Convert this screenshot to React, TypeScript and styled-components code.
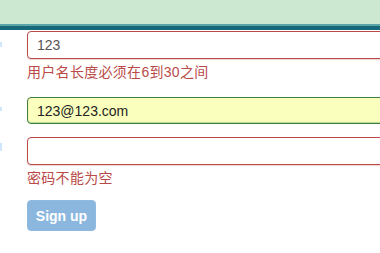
import React from "react";
import styled, { createGlobalStyle } from "styled-components";

const GlobalStyle = createGlobalStyle`
  body {
    margin: 0;
    background: #ffffff;
    font-family: "Liberation Sans", Arial, "Noto Sans CJK SC", sans-serif;
    overflow: hidden;
  }
`;

const Header = styled.div`
  height: 24px;
  background: #cde8d0;
  border-bottom: 2px solid #5aa3a6;
`;

const HeaderRule = styled.div`
  height: 4px;
  background: #15697b;
`;

const Viewport = styled.div`
  overflow: hidden;
`;

const Form = styled.form`
  display: flex;
  flex-direction: column;
  padding-top: 1px;
  width: 420px;
`;

const Row = styled.div<{ $gap: number }>`
  display: flex;
  margin-top: ${(p) => p.$gap}px;
`;

const LabelCol = styled.div<{ $top: number; $h: number }>`
  width: 27px;
  flex: none;
  &::before {
    content: "";
    display: block;
    margin-top: ${(p) => p.$top}px;
    width: 2px;
    height: ${(p) => p.$h}px;
    background: #cfe6fb;
  }
`;

const Field = styled.div`
  flex: 1;
  display: flex;
  flex-direction: column;
`;

const Input = styled.input<{ $state: "error" | "success"; $h?: number }>`
  box-sizing: border-box;
  height: ${(p) => p.$h ?? 28}px;
  width: 100%;
  padding: 0 9px;
  font: 14px "Liberation Sans", Arial, sans-serif;
  color: ${(p) => (p.$state === "success" ? "#222" : "#555")};
  background: ${(p) => (p.$state === "success" ? "#faffbd" : "#fff")};
  border: 1px solid ${(p) => (p.$state === "success" ? "#3d7f3e" : "#b94a48")};
  border-radius: 4px;
  box-shadow: ${(p) =>
    p.$state === "success"
      ? "inset 0 -1px 1px rgba(70,136,71,0.35)"
      : "0 1px 1px rgba(185,74,72,0.25)"};
  outline: none;
`;

const Help = styled.div`
  margin-top: 3px;
  font-size: 14px;
  line-height: 20px;
  letter-spacing: 0.3px;
  color: #b94a48;
`;

const Button = styled.button`
  margin-left: 27px;
  margin-top: 12px;
  width: 69px;
  height: 31px;
  border: 1px solid #8fbae0;
  border-radius: 4px;
  background: #8bb7df;
  color: #ffffff;
  font: bold 14px "Liberation Sans", Arial, sans-serif;
  padding: 0;
  align-self: flex-start;
`;

export default function App() {
  return (
    <>
      <GlobalStyle />
      <Header />
      <HeaderRule />
      <Viewport>
        <Form onSubmit={(e) => e.preventDefault()}>
          <Row $gap={0}>
            <LabelCol $top={11} $h={5} />
            <Field>
              <Input $state="error" defaultValue="123" />
              <Help>用户名长度必须在6到30之间</Help>
            </Field>
          </Row>
          <Row $gap={15}>
            <LabelCol $top={10} $h={4} />
            <Field>
              <Input $state="success" $h={27} defaultValue="123@123.com" />
            </Field>
          </Row>
          <Row $gap={13}>
            <LabelCol $top={6} $h={8} />
            <Field>
              <Input $state="error" type="password" defaultValue="" />
              <Help>密码不能为空</Help>
            </Field>
          </Row>
          <Button type="submit" disabled>
            Sign up
          </Button>
        </Form>
      </Viewport>
    </>
  );
}
